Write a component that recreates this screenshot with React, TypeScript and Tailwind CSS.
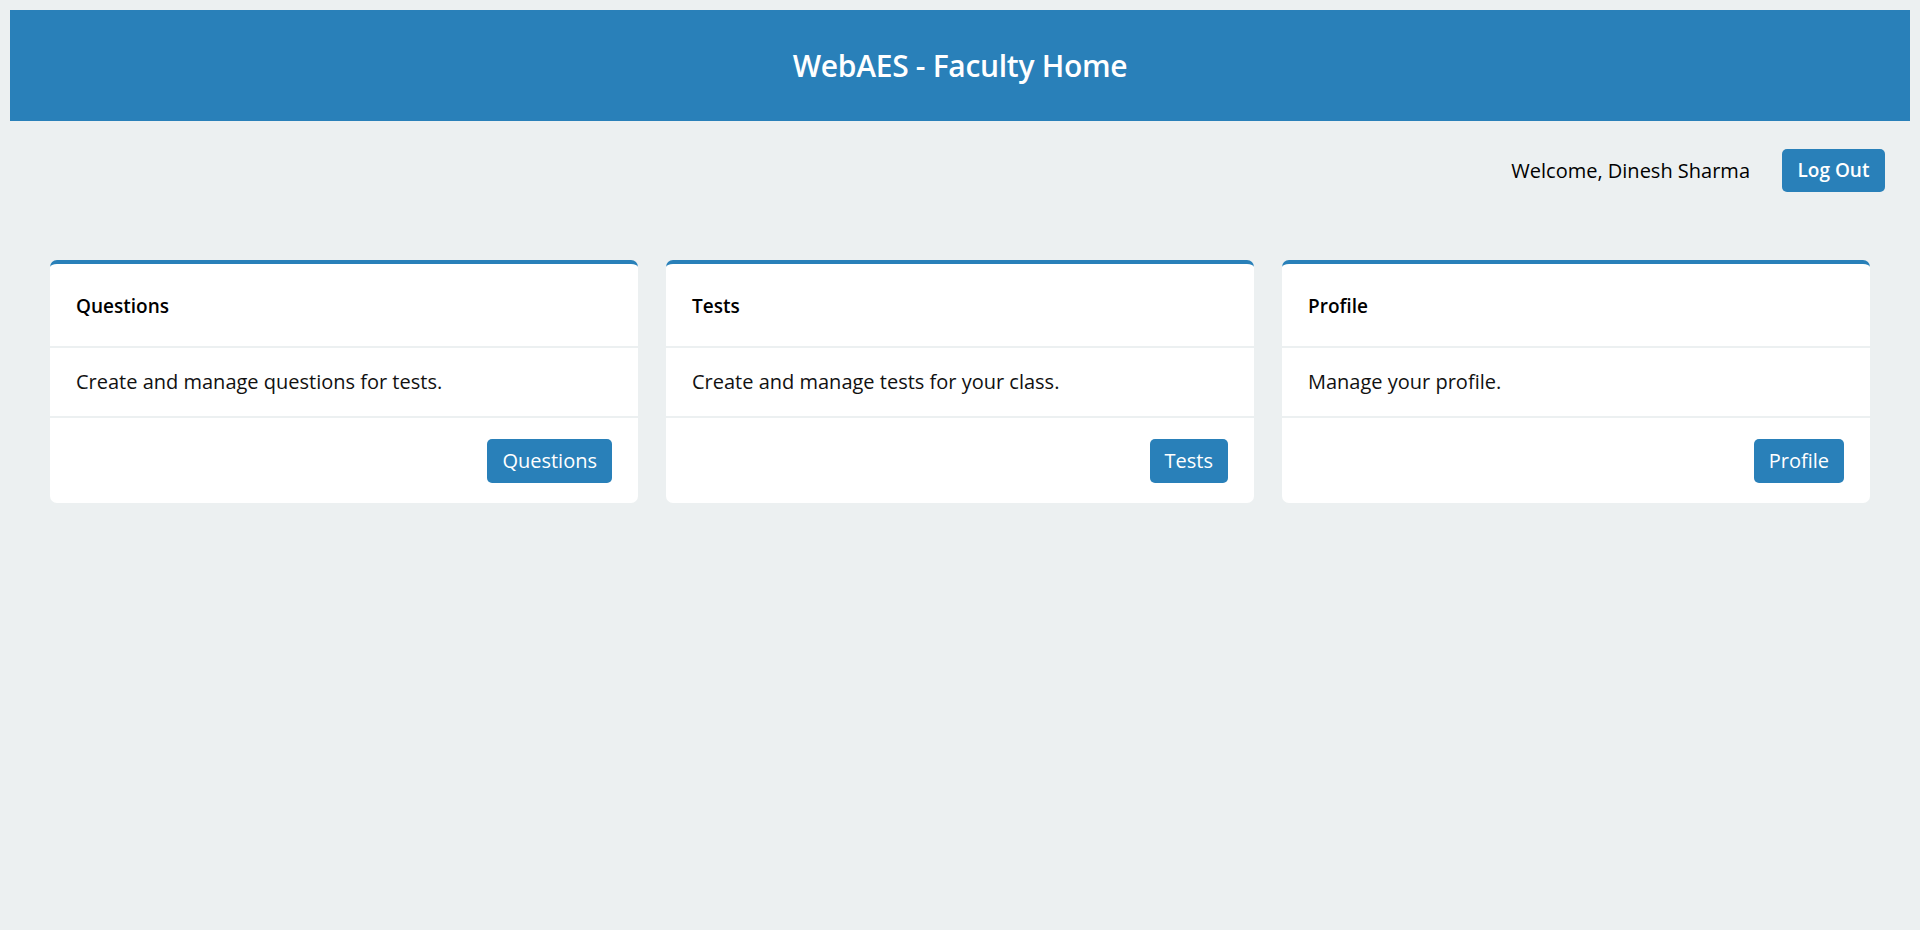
import React from "react";

const cards = [
  { title: "Questions", desc: "Create and manage questions for tests.", btn: "Questions" },
  { title: "Tests", desc: "Create and manage tests for your class.", btn: "Tests" },
  { title: "Profile", desc: "Manage your profile.", btn: "Profile" },
];

export default function App() {
  return (
    <div
      className="min-h-screen bg-[#ecf0f1] p-[10px]"
      style={{ fontFamily: '"Open Sans", "Noto Sans", sans-serif' }}
    >
      <header className="flex h-[111px] items-center justify-center bg-[#2980b9]">
        <h1 className="text-[30px] font-semibold tracking-[-0.3px] text-white">WebAES - Faculty Home</h1>
      </header>

      <div className="mt-[28px] flex items-center justify-end pr-[25px]">
        <span className="text-[20px] text-black">Welcome, Dinesh Sharma</span>
        <button className="ml-[32px] flex h-[43px] w-[103px] items-center justify-center rounded-[5px] bg-[#2980b9] text-[19px] font-semibold text-white">
          Log Out
        </button>
      </div>

      <div className="mx-[40px] mt-[68px] grid grid-cols-3 gap-[28px]">
        {cards.map((c) => (
          <div key={c.title} className="overflow-hidden rounded-[7px] border-t-4 border-[#2980b9] bg-white">
            <div className="flex h-[84px] items-center border-b-2 border-[#ecf0f1] px-[26px] pt-[2px]">
              <h2 className="text-[19px] font-semibold text-black">{c.title}</h2>
            </div>
            <div className="flex h-[70px] items-center border-b-2 border-[#ecf0f1] px-[26px]">
              <p className="text-[20px] text-[#111]">{c.desc}</p>
            </div>
            <div className="flex h-[85px] items-center justify-end px-[26px]">
              <button className="flex h-[44px] items-center rounded-[5px] bg-[#2980b9] px-[15px] text-[20px] text-white">
                {c.btn}
              </button>
            </div>
          </div>
        ))}
      </div>
    </div>
  );
}
